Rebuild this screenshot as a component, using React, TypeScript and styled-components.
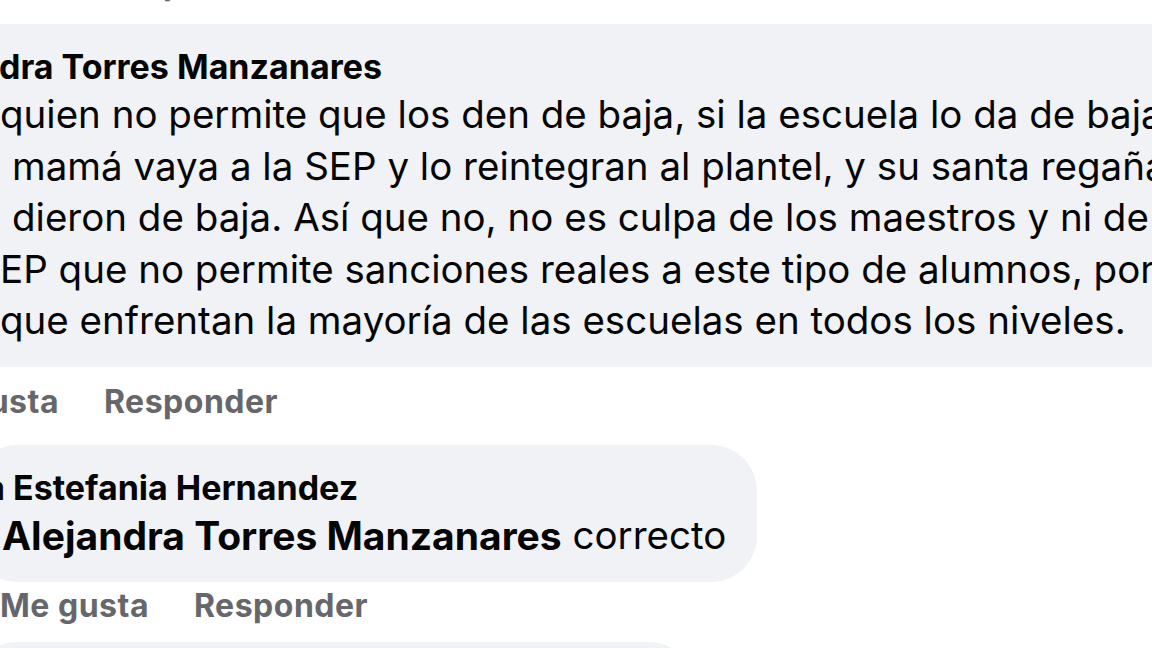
import React from 'react';
import styled, { createGlobalStyle } from 'styled-components';

// page
const GlobalStyle = createGlobalStyle`
  html, body {
    margin: 0;
    padding: 0;
    background: #ffffff;
  }

  body {
    font-family: Inter, "Noto Sans", "Liberation Sans", sans-serif;
    -webkit-font-smoothing: antialiased;
  }
`;

const Stage = styled.div`
  width: 1152px;
  height: 648px;
  overflow: hidden;
  background: #ffffff;
`;

// the thread is bigger than the window: it starts above and to the left of it
const Feed = styled.div`
  display: flex;
  flex-direction: column;
  align-items: flex-start;
  gap: 22px;
  margin: -40px 0 0 -119px;
`;

const Comment = styled.div`
  display: flex;
  flex-direction: column;
  align-items: flex-start;
`;

const Replies = styled.div`
  display: flex;
  flex-direction: column;
  align-items: flex-start;
  gap: 18px;
  padding-top: 25.5px;
  margin-left: 90px;
`;

const Bubble = styled.div`
  display: flex;
  flex-direction: column;
  background: #f0f2f5;
  border-radius: 46px;
  padding: 21px 31px 20.5px;
  color: #050505;
`;

const Line = styled.div`
  display: flex;
  white-space: pre;
`;

const Name = styled(Line)`
  font-size: 34px;
  font-weight: 700;
  line-height: 44px;
`;

const Text = styled(Line)`
  font-size: 38.5px;
  font-weight: 400;
  line-height: 51.5px;
`;

// start of a line that is cut off by the left edge of the window
const Cut = styled.span<{ $w: number }>`
  flex: 0 0 auto;
  display: flex;
  justify-content: flex-end;
  width: ${p => p.$w}px;
`;

const Mention = styled.span`
  font-size: 39px;
  font-weight: 700;
`;

const Actions = styled.div<{ $spaced?: boolean }>`
  display: flex;
  gap: 45px;
  padding-left: 29px;
  margin-top: ${p => (p.$spaced ? 16.5 : 6)}px;
  font-size: 32px;
  font-weight: 700;
  letter-spacing: 0.5px;
  line-height: 36px;
  color: #65676b;
  white-space: nowrap;
`;

const Action = styled.span`
  cursor: pointer;
`;

interface CutLine {
  cut: string;
  at: number;
  text: string;
}

// x where the content of a bubble starts, relative to the window
const PARENT_LEFT = -88;
const REPLY_LEFT = 2;

const parentName: CutLine = { cut: 'Alejan', at: -1, text: 'dra Torres Manzanares' };

const parentLines: CutLine[] = [
  { cut: 'Es la SEP ', at: 0, text: 'quien no permite que los den de baja, si la escuela lo da de baja, basta con' },
  { cut: 'con que la ', at: 12, text: 'mamá vaya a la SEP y lo reintegran al plantel, y su santa regañada a los que lo' },
  { cut: 'que lo ', at: 12, text: 'dieron de baja. Así que no, no es culpa de los maestros y ni de la escuela, es de la' },
  { cut: 'de la S', at: 0, text: 'EP que no permite sanciones reales a este tipo de alumnos, por eso es el problema' },
  { cut: 'problema ', at: 0, text: 'que enfrentan la mayoría de las escuelas en todos los niveles.' },
];

const renderLine = (line: CutLine, left: number) => (
  <>
    <Cut $w={Math.max(0, line.at - left)}>{line.cut}</Cut>
    {line.text}
  </>
);

const CommentActions = ({ spaced }: { spaced?: boolean }) => (
  <Actions $spaced={spaced}>
    <Action>Me gusta</Action>
    <Action>Responder</Action>
  </Actions>
);

export default function App() {
  return (
    <Stage>
      <GlobalStyle />
      <Feed>
        {/* tail of the previous comment, its bubble is above the window */}
        <CommentActions />

        <Comment>
          <Bubble>
            <Name>{renderLine(parentName, PARENT_LEFT)}</Name>
            {parentLines.map((line, i) => (
              <Text key={i}>{renderLine(line, PARENT_LEFT)}</Text>
            ))}
          </Bubble>
          <CommentActions spaced />

          <Replies>
            <Comment>
              <Bubble>
                <Name>{renderLine({ cut: 'Diana ', at: 13, text: 'Estefania Hernandez' }, REPLY_LEFT)}</Name>
                <Text>
                  <Mention>Alejandra Torres Manzanares</Mention> correcto
                </Text>
              </Bubble>
              <CommentActions />
            </Comment>

            <Comment>
              <Bubble>
                <Name>Alejandra Torres Manzanares</Name>
                <Text>
                  <Mention>Diana Estefania Hernandez</Mention> así es...
                </Text>
              </Bubble>
              <CommentActions />
            </Comment>
          </Replies>
        </Comment>
      </Feed>
    </Stage>
  );
}
